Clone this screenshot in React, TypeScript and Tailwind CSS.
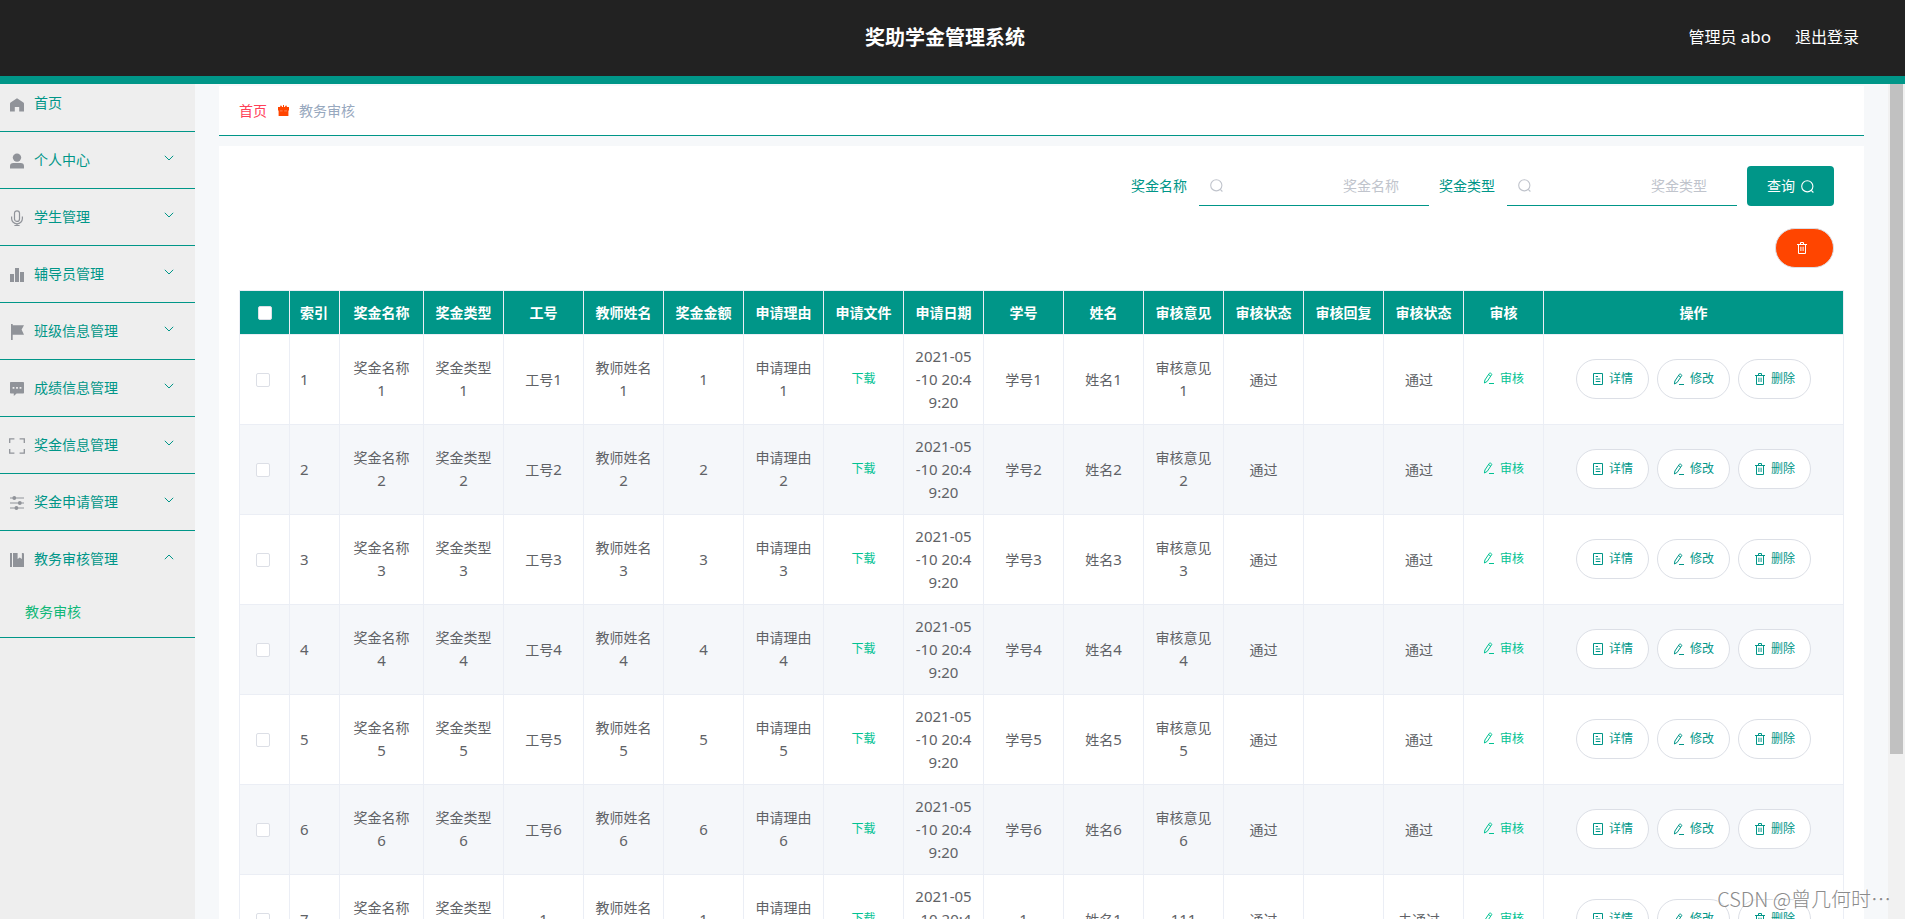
import React from "react";

type IconProps = { className?: string };

const Svg = ({ className = "", box = 14, children }: { className?: string; box?: number; children: React.ReactNode }) => (
  <svg viewBox={`0 0 ${box} ${box}`} className={`shrink-0 ${className}`} fill="none" stroke="currentColor">
    {children}
  </svg>
);

const HomeIcon = () => (
  <Svg className="size-3.5">
    <path fill="currentColor" stroke="none" d="M7 .3 13.4 4.6Q14 5 14 5.8V13.6H9.2V9H4.8V13.6H0V5.8Q0 5 .6 4.6Z" />
  </Svg>
);
const UserIcon = () => (
  <Svg className="size-4" box={16}>
    <g fill="currentColor" stroke="none">
      <circle cx="8" cy="4.6" r="4.2" />
      <path d="M1 15.4V13Q1 10 4.4 10H11.6Q15 10 15 13V15.4Z" />
    </g>
  </Svg>
);
const MicIcon = () => (
  <Svg className="size-4" box={16}>
    <rect x="5.5" y=".8" width="5" height="10.6" rx="2.5" strokeWidth="1.2" />
    <path strokeWidth="1.2" d="M2.6 6.5V8.4A5.4 5.4 0 0 0 13.4 8.4V6.5M8 13.8V15.4M5.4 15.5H10.6" />
  </Svg>
);
const BarsIcon = () => (
  <Svg className="size-3.5">
    <path fill="currentColor" stroke="none" d="M0 6H4V14H0ZM5 0H9V14H5ZM10 4H14V14H10Z" />
  </Svg>
);
const FlagIcon = () => (
  <Svg className="size-4" box={16}>
    <path fill="currentColor" stroke="none" d="M2 0H3.7V1.2H15L12.6 5.6L15 10.8H3.7V16H2Z" />
  </Svg>
);
const CommentIcon = () => (
  <Svg className="size-3.5">
    <path
      fill="currentColor"
      stroke="none"
      fillRule="evenodd"
      d="M.8 0H13.2Q14 0 14 .8V10.8Q14 11.6 13.2 11.6H6.6L3.8 14V11.6H.8Q0 11.6 0 10.8V.8Q0 0 .8 0ZM2.6 5V6.8H4.4V5ZM6.1 5V6.8H7.9V5ZM9.6 5V6.8H11.4V5Z"
    />
  </Svg>
);
const FrameIcon = () => (
  <Svg className="size-4" box={16}>
    <path strokeWidth="1.3" d="M.7 5V.9H5.4M10.6 .9H15.3V5M15.3 11V15.1H10.6M5.4 15.1H.7V11" />
  </Svg>
);
const SlidersIcon = () => (
  <Svg className="size-3.5">
    <path strokeWidth="1.1" d="M0 2H14M0 7H14M0 12H14" />
    <g fill="currentColor" stroke="none">
      <circle cx="4.3" cy="2" r="1.9" />
      <circle cx="9.8" cy="7" r="1.9" />
      <circle cx="6.4" cy="12" r="1.9" />
    </g>
  </Svg>
);
const NotebookIcon = () => (
  <Svg className="size-3.5">
    <path fill="currentColor" stroke="none" d="M0 0H2V14H0ZM3 0H7.6V6L9.8 4.4L11.9 6V0H13Q14 0 14 1V14H3Z" />
  </Svg>
);
const ChevronIcon = ({ className = "" }: IconProps) => (
  <Svg className={`h-2.5 w-2.5 ${className}`} box={10}>
    <path d="M.8 2.8 5 7 9.2 2.8" />
  </Svg>
);
const GiftIcon = () => (
  <Svg className="h-[11px] w-[11px] text-[#ff4500]" box={11}>
    <path
      fill="currentColor"
      stroke="none"
      d="M0 2H2.2V.8L3.2 .4 4.2 2H5V0H6V2H6.8L7.8 .4 8.8 .8V2H11V5.4H10.4V11H.6V5.4H0Z"
    />
    <path stroke="#fff" strokeOpacity=".45" strokeWidth=".7" d="M2 5.9H4.6M6.2 5.9H9" />
  </Svg>
);
const SearchIcon = ({ className = "" }: IconProps) => (
  <Svg className={`h-[13px] w-[13px] ${className}`} box={13}>
    <circle cx="6.3" cy="6.3" r="5.6" strokeWidth="1.1" />
    <path strokeWidth="1.1" d="M10.2 10.3 12.4 12.5" />
  </Svg>
);
const TrashIcon = () => (
  <Svg className="h-3 w-3" box={12}>
    <path d="M1 2.5H11M4.5 2.3V.5H7.5V2.3M2.5 2.5V11.5H9.5V2.5M4.9 4.7V9M7.1 4.7V9" />
  </Svg>
);
const DocIcon = () => (
  <Svg className="h-3 w-3" box={12}>
    <path d="M1.5 .5H10.5V11.5H1.5ZM3.7 3.5H6M3.7 6H8.3M3.7 8.5H8.3" />
  </Svg>
);
const EditIcon = () => (
  <Svg className="h-3 w-3" box={12}>
    <path d="M1.4 11 1.9 8 6.3 1.4Q6.8 .7 7.5 1.1L8.4 1.7Q9 2.2 8.6 2.8L4.2 9.4ZM5.6 2.6 7.7 4.1M6 11.5H11" />
  </Svg>
);

const menu = [
  { label: "个人中心", icon: <UserIcon /> },
  { label: "学生管理", icon: <MicIcon /> },
  { label: "辅导员管理", icon: <BarsIcon /> },
  { label: "班级信息管理", icon: <FlagIcon /> },
  { label: "成绩信息管理", icon: <CommentIcon /> },
  { label: "奖金信息管理", icon: <FrameIcon /> },
  { label: "奖金申请管理", icon: <SlidersIcon /> },
];

const columns = [
  "奖金名称", "奖金类型", "工号", "教师姓名", "奖金金额", "申请理由", "申请文件", "申请日期",
  "学号", "姓名", "审核意见", "审核状态", "审核回复", "审核状态", "审核", "操作",
];

const rows = [
  ...[1, 2, 3, 4, 5, 6].map((n) => ({
    id: n, job: ["工号", n], no: ["学号", n], amount: n, name: n, opinion: null, result: "通过",
  })),
  { id: 7, job: ["", 1], no: ["", 1], amount: 1, name: 1, opinion: "111", result: "未通过" },
];

const MenuRow = ({ icon, label, open = false }: { icon: React.ReactNode; label: string; open?: boolean }) => (
  <div className="flex h-14 items-center pl-[5px] text-[#009688]">
    <span className="flex w-6 justify-center pt-0.5 text-[#909399]">{icon}</span>
    <span className="ml-[5px] flex-1">{label}</span>
    <ChevronIcon className={open ? "mr-[21px] mb-1 rotate-180" : "mr-[21px] mb-1"} />
  </div>
);

const Filter = ({ label }: { label: string }) => (
  <div className="flex items-center">
    <span className="w-[68px] text-[#009688]">{label}</span>
    <div className="flex h-10 w-[230px] items-center justify-between border-b border-[#009688] pr-[30px] pl-[11px] text-[#c0c4cc]">
      <SearchIcon />
      <span>{label}</span>
    </div>
  </div>
);

const PillButton = ({ icon, label }: { icon: React.ReactNode; label: string }) => (
  <button className="flex h-10 w-[73px] items-center justify-center gap-[5px] rounded-[20px] border border-[#dcdfe6] bg-white text-xs text-[#009688]">
    {icon}
    <span>{label}</span>
  </button>
);

const Cell = ({ children, className = "text-center" }: { children?: React.ReactNode; className?: string }) => (
  <td className={`border-r border-b border-[#ebeef5] p-0 leading-[23px] whitespace-pre-line ${className}`}>{children}</td>
);

const Num = ({ children }: { children: React.ReactNode }) => <span className="text-[15px] leading-[22px]">{children}</span>;

const Stacked = ({ label, value }: { label: string; value: React.ReactNode }) => (
  <Cell className="pb-0.5 text-center">
    {label}
    <br />
    <Num>{value}</Num>
  </Cell>
);

const Box = () => <span className="block size-3.5 rounded-[2px] border border-[#dcdfe6] bg-white" />;

export default function App() {
  return (
    <div className="relative flex h-[919px] w-[1905px] flex-col overflow-hidden bg-[#f6f8fa] font-['Noto_Sans','Noto_Sans_CJK_SC',sans-serif] text-sm text-[#606266]">
      <header className="grid h-[84px] shrink-0 grid-cols-[1fr_auto_1fr] items-center border-b-8 border-[#009688] bg-[#222] text-white">
        <h1 className="col-start-2 mr-[15px] text-xl font-bold">奖助学金管理系统</h1>
        <div className="flex items-baseline justify-end gap-6 pr-[46px] pb-[3px] text-base">
          <span>
            管理员 <span className="text-[17px] leading-6">abo</span>
          </span>
          <span>退出登录</span>
        </div>
      </header>

      <div className="flex min-h-0 flex-1">
        <aside className="w-[195px] shrink-0 bg-[#eee]">
          <div className="flex h-12 items-start border-b border-[#009688] pt-[9px] pl-[5px] text-[#009688]">
            <span className="flex w-6 justify-center pt-[5px] text-[#909399]">
              <HomeIcon />
            </span>
            <span className="ml-[5px]">首页</span>
          </div>
          {menu.map((m) => (
            <div key={m.label} className="border-b border-[#009688]">
              <MenuRow {...m} />
            </div>
          ))}
          <div className="h-[107px] border-b border-[#009688]">
            <MenuRow icon={<NotebookIcon />} label="教务审核管理" open />
            <div className="flex h-[49px] items-center pl-[25px] text-[#10b878]">教务审核</div>
          </div>
        </aside>

        <main className="flex-1 overflow-hidden pt-0.5 pr-6 pl-6">
          <nav className="flex h-[50px] items-center border-b border-[#009688] bg-white pl-5">
            <span className="text-[#ff4057]">首页</span>
            <span className="mr-2.5 ml-[11px]">
              <GiftIcon />
            </span>
            <span className="text-[#97a8be]">教务审核</span>
          </nav>

          <section className="mt-2.5 h-[900px] bg-white px-5 pt-5">
            <div className="flex items-center justify-end gap-2.5 pr-2.5">
              <Filter label="奖金名称" />
              <Filter label="奖金类型" />
              <button className="flex h-10 w-[87px] items-center justify-center gap-1.5 rounded bg-[#009688] text-white">
                查询
                <SearchIcon />
              </button>
            </div>
            <div className="mt-[22px] flex justify-end pr-2.5">
              <button className="flex h-10 w-[59px] items-center rounded-[20px] border border-[#dcdfe6] bg-[#ff4500] pl-5 text-white">
                <TrashIcon />
              </button>
            </div>

            <table className="mt-[22px] w-[1605px] table-fixed border-separate border-spacing-0 border-t border-l border-[#ebeef5]">
              <colgroup>
                <col className="w-[50px]" />
                <col className="w-[50px]" />
                <col className="w-[84px]" />
                {columns.slice(1, 15).map((c, i) => (
                  <col key={c + i} className="w-20" />
                ))}
                <col className="w-[300px]" />
              </colgroup>
              <thead>
                <tr className="h-11 bg-[#009688] text-white">
                  <th className="border-r border-b border-[#ebeef5] p-0 pl-[18px]">
                    <Box />
                  </th>
                  <th className="border-r border-b border-[#ebeef5] p-0 pl-2.5 text-left">索引</th>
                  {columns.map((c, i) => (
                    <th key={c + i} className="border-r border-b border-[#ebeef5] p-0 text-center">
                      {c}
                    </th>
                  ))}
                </tr>
              </thead>
              <tbody>
                {rows.map((r) => (
                  <tr key={r.id} className="h-[90px] even:bg-[#f5f7fa]">
                    <Cell className="pl-4">
                      <Box />
                    </Cell>
                    <Cell className="pb-px pl-2.5">
                      <Num>{r.id}</Num>
                    </Cell>
                    <Stacked label="奖金名称" value={r.id} />
                    <Stacked label="奖金类型" value={r.id} />
                    <Cell>
                      {r.job[0]}
                      <Num>{r.job[1]}</Num>
                    </Cell>
                    <Stacked label="教师姓名" value={r.id} />
                    <Cell className="pb-px text-center">
                      <Num>{r.amount}</Num>
                    </Cell>
                    <Stacked label="申请理由" value={r.id} />
                    <Cell className="pb-[3px] text-center text-xs text-[#00c292]">下载</Cell>
                    <Cell className="pb-px text-center text-[15px]">{"2021-05\n-10 20:4\n9:20"}</Cell>
                    <Cell>
                      {r.no[0]}
                      <Num>{r.no[1]}</Num>
                    </Cell>
                    <Cell>
                      姓名<Num>{r.name}</Num>
                    </Cell>
                    {r.opinion ? (
                      <Cell>
                        <Num>{r.opinion}</Num>
                      </Cell>
                    ) : (
                      <Stacked label="审核意见" value={r.id} />
                    )}
                    <Cell>通过</Cell>
                    <Cell />
                    <Cell className="pr-[9px] text-center">{r.result}</Cell>
                    <Cell className="pb-[3px] text-xs text-[#00c292]">
                      <span className="flex items-center justify-center gap-[5px]">
                        <EditIcon />
                        审核
                      </span>
                    </Cell>
                    <Cell className="pb-px">
                      <div className="flex justify-center gap-2">
                        <PillButton icon={<DocIcon />} label="详情" />
                        <PillButton icon={<EditIcon />} label="修改" />
                        <PillButton icon={<TrashIcon />} label="删除" />
                      </div>
                    </Cell>
                  </tr>
                ))}
              </tbody>
            </table>
          </section>
        </main>

        <div className="flex w-[17px] shrink-0 justify-center bg-[#f1f1f1]">
          <div className="h-[670px] w-[13px] bg-[#c1c1c1]" />
        </div>
      </div>

      <div className="absolute right-[14px] bottom-1.5 font-['Noto_Sans_CJK_SC',sans-serif] text-xl leading-7 font-light text-[#8b8b8b] [text-shadow:-1px_-1px_0_#fff]">
        CSDN @曾几何时⋯
      </div>
    </div>
  );
}
